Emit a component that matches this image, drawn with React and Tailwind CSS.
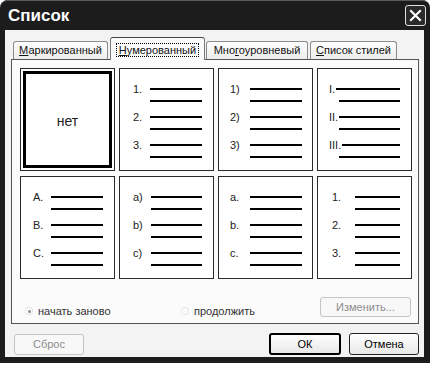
import React from 'react';

const FONT = { fontFamily: '"Liberation Sans", Arial, sans-serif' };

// list presets, classes are written out for each cell
const PRESETS = [
  [
    null,
    { labels: ['1.', '2.', '3.'], pad: 'pl-[13px]', box: 'w-[17px]', off: 'ml-[30px]', line: 'w-[52px]' },
    { labels: ['1)', '2)', '3)'], pad: 'pl-[11px]', box: 'w-[20px]', off: 'ml-[31px]', line: 'w-[52px]' },
    { labels: ['I.', 'II.', 'III.'], pad: 'pl-[11px]', roman: true, off: 'ml-[21px]', line: 'w-[61px]' },
  ],
  [
    { labels: ['A.', 'B.', 'C.'], pad: 'pl-[12px]', box: 'w-[18px]', off: 'ml-[30px]', line: 'w-[52px]' },
    { labels: ['a)', 'b)', 'c)'], pad: 'pl-[13px]', box: 'w-[18px]', off: 'ml-[31px]', line: 'w-[51px]' },
    { labels: ['a.', 'b.', 'c.'], pad: 'pl-[11px]', box: 'w-[20px]', off: 'ml-[31px]', line: 'w-[52px]' },
    { labels: ['1.', '2.', '3.'], pad: 'pl-[14px]', box: 'w-[23px]', off: 'ml-[37px]', line: 'w-[45px]' },
  ],
];

function NoneCell() {
  return (
    <div className="h-[103px] border border-[#2a2a2a] bg-white p-[2px]">
      <div className="flex h-full items-center justify-center border-[3px] border-black pt-[4px] text-[14px] text-[#222]">
        нет
      </div>
    </div>
  );
}

function ListCell({ preset }) {
  return (
    <div className="h-[103px] border border-[#2a2a2a] bg-white pt-[14px] text-[11px] leading-[12px] text-[#222]">
      {preset.labels.map((label) => (
        <div key={label} className="h-[28px]">
          <div className={`flex h-[12px] items-center ${preset.pad}`}>
            {preset.roman ? (
              <>
                <span className="mr-[1px]">{label}</span>
                <div className="mr-[11px] h-[2px] flex-1 bg-black" />
              </>
            ) : (
              <>
                <span className={`shrink-0 ${preset.box}`}>{label}</span>
                <div className={`h-[2px] bg-black ${preset.line}`} />
              </>
            )}
          </div>
          <div className="flex h-[12px] items-center">
            <div className={`h-[2px] bg-black ${preset.off} ${preset.line}`} />
          </div>
        </div>
      ))}
    </div>
  );
}

function Tab({ children, width, active }) {
  if (active) {
    return (
      <div
        className={`relative z-10 -mb-px flex h-[23px] items-start justify-center rounded-t-[3px] border border-b-0 border-[#777] border-t-[#444] bg-[#fbfbfb] pt-[5px] ${width}`}
      >
        <span className="border border-dotted border-black px-[2px] leading-[12px]">{children}</span>
      </div>
    );
  }
  return (
    <div
      className={`flex h-[18px] items-center justify-center rounded-t-[3px] border border-b-0 border-[#8a8a8a] bg-gradient-to-b from-white to-[#ededed] ${width}`}
    >
      {children}
    </div>
  );
}

function Radio({ checked, children }) {
  return (
    <div className="flex h-[14px] items-center gap-[5px]">
      <div className="flex h-[8px] w-[8px] items-center justify-center rounded-full border border-dotted border-[#d0d0d0]">
        {checked && <div className="h-[3px] w-[3px] rounded-full bg-[#8a8a8a]" />}
      </div>
      <span className="text-[11px] text-[#333]">{children}</span>
    </div>
  );
}

export default function App() {
  return (
    <div className="h-[368px] w-[433px] overflow-hidden bg-white" style={FONT}>
      <div className="flex h-[363px] w-[430px] flex-col rounded-t-[8px] bg-[#1c1c1c] pb-[6px]">
        {/* Title bar */}
        <div className="flex h-[30px] items-center justify-between rounded-t-[8px] border-t border-[#5a5a5a] pl-[8px] pr-[4px]">
          <span className="text-[17px] font-bold text-white">Список</span>
          <div className="flex h-[21px] w-[21px] items-center justify-center rounded-[3px] border border-[#e0e0e0] bg-[#2a2a2a]">
            <svg width="13" height="13" viewBox="0 0 13 13">
              <path d="M2 2 L11 11 M11 2 L2 11" stroke="white" strokeWidth="2.2" strokeLinecap="square" />
            </svg>
          </div>
        </div>

        {/* Body */}
        <div className="ml-[5px] mr-[6px] flex flex-1 flex-col bg-[#f3f3f3] text-[#111]">
          {/* Tabs */}
          <div className="ml-[8px] mt-[7px] flex items-end text-[11px]">
            <Tab width="w-[95px]">
              <span><u>М</u>аркированный</span>
            </Tab>
            <div className="ml-[2px]">
              <Tab width="w-[95px]" active>
                <u>Н</u>умерованный
              </Tab>
            </div>
            <div className="ml-[1px]">
              <Tab width="w-[102px]">
                <span>Мно<u>г</u>оуровневый</span>
              </Tab>
            </div>
            <div className="ml-[2px]">
              <Tab width="w-[87px]">
                <span><u>С</u>писок стилей</span>
              </Tab>
            </div>
          </div>

          {/* Panel */}
          <div className="ml-[6px] flex h-[265px] w-[408px] flex-col border border-[#555] bg-[#fbfbfb] pl-[8px] pr-[6px] pt-[8px]">
            <div className="grid grid-cols-4 gap-x-[4px] gap-y-[5px]">
              {PRESETS.flat().map((preset, i) =>
                preset ? <ListCell key={i} preset={preset} /> : <NoneCell key={i} />
              )}
            </div>
            <div className="mt-[18px] flex items-start">
              <div className="ml-[5px] mt-[7px] w-[156px]">
                <Radio checked>начать заново</Radio>
              </div>
              <div className="mt-[7px]">
                <Radio>продолжить</Radio>
              </div>
              <div className="ml-auto mr-[1px] flex h-[20px] w-[91px] items-center justify-center rounded-[3px] border border-[#c4c4c4] bg-[#f8f8f8] text-[11px] text-[#8c8c8c]">
                Изменить...
              </div>
            </div>
          </div>

          {/* Buttons */}
          <div className="mt-[9px] flex items-center pl-[9px] pr-[5px] text-[11px]">
            <div className="flex h-[21px] w-[70px] items-center justify-center rounded-[3px] border border-[#c4c4c4] bg-[#f8f8f8] text-[#8c8c8c]">
              Сброс
            </div>
            <div className="ml-auto flex h-[22px] w-[72px] items-center justify-center rounded-[3px] border-2 border-black bg-gradient-to-b from-white to-[#e8e8e8] text-black">
              ОК
            </div>
            <div className="ml-[8px] flex h-[22px] w-[70px] items-center justify-center rounded-[3px] border border-[#222] bg-gradient-to-b from-white to-[#e8e8e8] text-black">
              Отмена
            </div>
          </div>
        </div>
      </div>
    </div>
  );
}
